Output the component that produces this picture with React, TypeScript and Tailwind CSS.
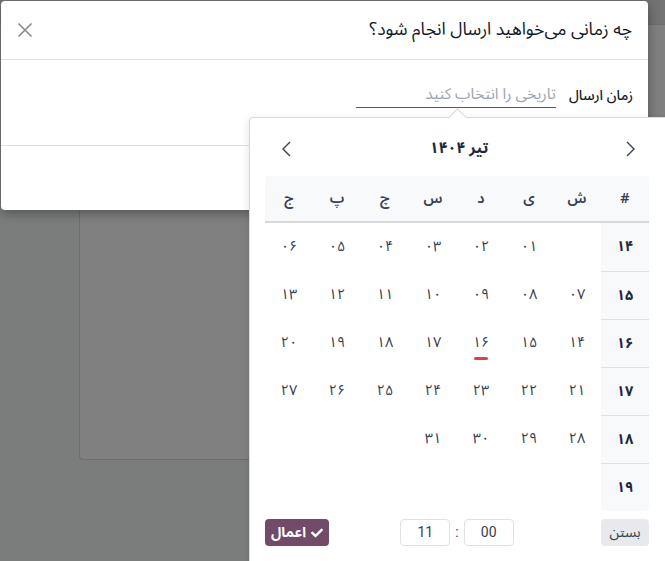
import React from "react";
import { FaCheck } from "react-icons/fa";

const fa = (s: string) => s.replace(/[0-9]/g, (d) => "۰۱۲۳۴۵۶۷۸۹"[Number(d)]);

const weeks: { w: string; days: (string | null)[] }[] = [
  { w: "14", days: [null, "01", "02", "03", "04", "05", "06"] },
  { w: "15", days: ["07", "08", "09", "10", "11", "12", "13"] },
  { w: "16", days: ["14", "15", "16", "17", "18", "19", "20"] },
  { w: "17", days: ["21", "22", "23", "24", "25", "26", "27"] },
  { w: "18", days: ["28", "29", "30", "31", null, null, null] },
  { w: "19", days: [null, null, null, null, null, null, null] },
];

const dayNames = ["ش", "ی", "د", "س", "چ", "پ", "ج"];

const FONT = "font-['Noto_Sans_Arabic','Vazirmatn','DejaVu_Sans','Noto_Sans',sans-serif]";

export default function App() {
  return (
    <div className={`relative w-[665px] h-[561px] overflow-hidden bg-[#7b7d7c] ${FONT}`}>
      {/* background page */}
      <div className="flex flex-col h-full">
        <div className="h-[25px] bg-[#737373] border-b border-[#6e6e6e]" />
        <div className="pl-[79px]">
          <div className="h-[435px] bg-[#808080] border-l border-b border-[#6d6d6d] rounded-bl-[4px]" />
        </div>
      </div>

      {/* dialog */}
      <div
        dir="rtl"
        className="absolute left-[1px] top-[1px] w-[647px] h-[209px] bg-white rounded-[4px] shadow-[0_3px_12px_rgba(0,0,0,0.35)] flex flex-col"
      >
        <div className="h-[59px] border-b border-[#dcdfe3] flex items-center justify-between pr-[16px] pl-[16px] shrink-0">
          <div className="text-[17.5px] text-[#111827]">چه زمانی می‌خواهید ارسال انجام شود؟</div>
          <svg width="16" height="16" viewBox="0 0 16 16" className="text-[#8a8a8a]">
            <path d="M1.5 1.5 L14.5 14.5 M14.5 1.5 L1.5 14.5" stroke="currentColor" strokeWidth="1.6" fill="none" />
          </svg>
        </div>
        <div className="h-[86px] border-b border-[#dcdfe3] pr-[15px] pt-[23px] shrink-0">
          <div className="flex items-center gap-[13px]">
            <div className="text-[14px] font-medium text-[#111827]">زمان ارسال</div>
            <div className="w-[200px] h-[25px] border-b border-[#017e84] flex items-center text-[15.5px] text-[#9ca3af]">
              <span>تاریخی را انتخاب کنید</span>
            </div>
          </div>
        </div>
        <div className="flex-1" />
      </div>

      {/* date picker popover */}
      <div
        dir="rtl"
        className="absolute left-[249px] top-[117px] w-[420px] h-[460px] bg-white border border-[#d8dadd] rounded-[4px] shadow-[0_2px_8px_rgba(0,0,0,0.12)]"
      >
        <div className="absolute left-[201px] top-[-7px] w-[13px] h-[13px] rotate-45 bg-white border-l border-t border-[#d8dadd]" />
        <div className="w-[384px] mr-[19px] pt-[14px]">
          <div className="h-[34px] flex items-center justify-between mb-[10px]">
            <div className="w-[38px] flex justify-center text-[#374151]">
              <svg width="9" height="16" viewBox="0 0 9 16">
                <path d="M1 1 L8 8 L1 15" stroke="currentColor" strokeWidth="1.4" fill="none" />
              </svg>
            </div>
            <div className="text-[15.5px] font-bold text-[#1f2937]">{fa("تیر 1404")}</div>
            <div className="w-[42px] flex justify-center text-[#374151]">
              <svg width="9" height="16" viewBox="0 0 9 16">
                <path d="M8 1 L1 8 L8 15" stroke="currentColor" strokeWidth="1.4" fill="none" />
              </svg>
            </div>
          </div>

          <div className="grid grid-cols-8 h-[47px] bg-[#f8f9fa] border-b-2 border-[#d6d8db] rounded-t-[4px] text-[14.5px] font-semibold text-[#374151]">
            <div className="flex items-center justify-center">#</div>
            {dayNames.map((d) => (
              <div key={d} className="flex items-center justify-center">{d}</div>
            ))}
          </div>

          {weeks.map((row, i) => (
            <div key={row.w} className="grid grid-cols-8 h-[48px] text-[14.5px] text-[#374151]">
              <div
                className={`flex items-center justify-center bg-[#f8f9fa] font-bold text-[#1f2937] ${i > 0 ? "border-t border-[#dcdfe3]" : ""} ${i === weeks.length - 1 ? "rounded-b-[4px]" : ""}`}
              >
                {fa(row.w)}
              </div>
              {row.days.map((d, j) => (
                <div key={j} className="flex items-center justify-center">
                  {d && (
                    <span className="relative">
                      {fa(d)}
                      {d === "16" && (
                        <span className="absolute left-1/2 -translate-x-1/2 bottom-[-6px] w-[14px] h-[3px] rounded-full bg-[#d04451]" />
                      )}
                    </span>
                  )}
                </div>
              ))}
            </div>
          ))}

          <div className="grid grid-cols-[1fr_auto_1fr] items-center mt-[8px]">
            <div className="justify-self-start">
              <div className="w-[48px] h-[27px] rounded-[4px] bg-[#e7e9ed] flex items-center justify-center text-[14px] text-[#374151]">
                بستن
              </div>
            </div>
            <div className="flex items-center gap-[5px] font-['Roboto',sans-serif] text-[14px] text-[#374151]">
              <div className="w-[50px] h-[27px] border border-[#dee2e6] rounded-[4px] flex items-center justify-center">00</div>
              <div>:</div>
              <div className="w-[50px] h-[27px] border border-[#dee2e6] rounded-[4px] flex items-center justify-center">11</div>
            </div>
            <div className="justify-self-end">
              <div className="w-[64px] h-[27px] rounded-[4px] bg-[#714b67] flex items-center justify-center gap-[5px] text-[14px] font-bold text-white">
                <FaCheck className="w-[12px] h-[12px]" />
                <span>اعمال</span>
              </div>
            </div>
          </div>
        </div>
      </div>
    </div>
  );
}
